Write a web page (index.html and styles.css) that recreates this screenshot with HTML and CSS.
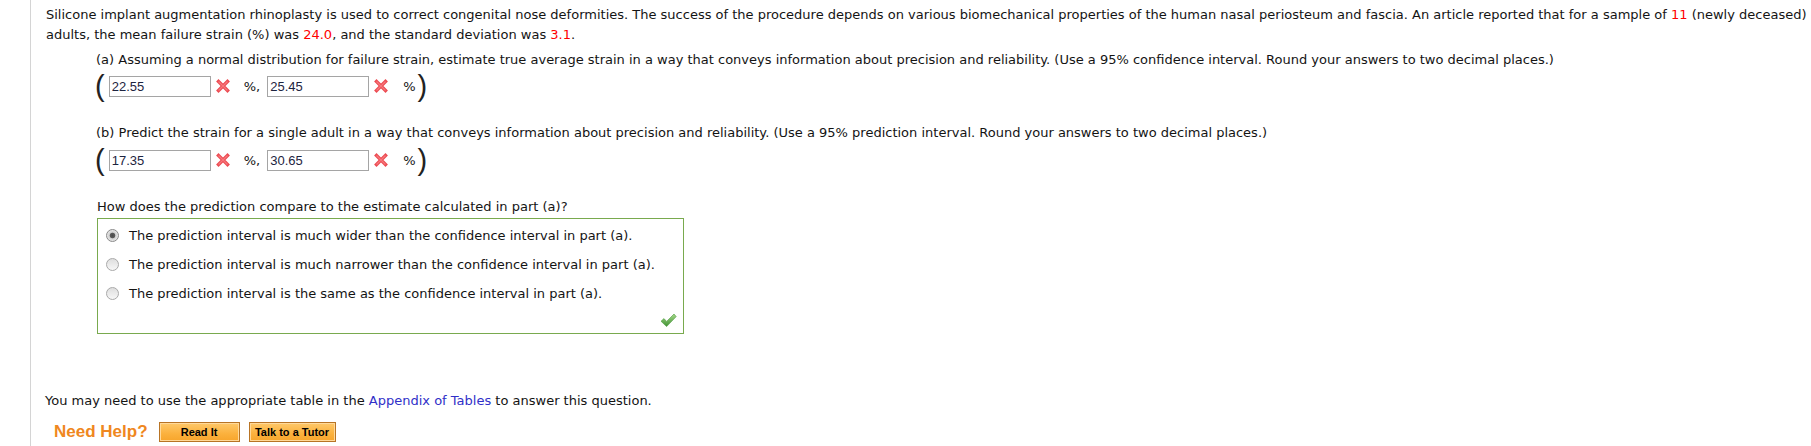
FILE: index.html
```html
<!DOCTYPE html>
<html>
<head>
<meta charset="utf-8">
<link rel="stylesheet" href="styles.css">
</head>
<body>
<div class="page">
  <p class="intro">Silicone implant augmentation rhinoplasty is used to correct congenital nose deformities. The success of the procedure depends on various biomechanical properties of the human nasal periosteum and fascia. An article reported that for a sample of <span class="red">11</span> (newly deceased) adults, the mean failure strain (%) was <span class="red">24.0</span>, and the standard deviation was <span class="red">3.1</span>.</p>

  <div class="part part-a">
    <p class="q">(a) Assuming a normal distribution for failure strain, estimate true average strain in a way that conveys information about precision and reliability. (Use a 95% confidence interval. Round your answers to two decimal places.)</p>
    <div class="interval">
      <span class="paren">(</span>
      <input class="field" type="text" value="22.55" readonly>
      <svg class="xmark" width="16" height="16" viewBox="0 0 16 16"><path d="M3.5 3.5 L12.5 12.5 M12.5 3.5 L3.5 12.5" stroke="#ec4b52" stroke-width="3.4" stroke-linecap="square" fill="none"/><path d="M3.5 3.5 L12.5 12.5 M12.5 3.5 L3.5 12.5" stroke="#f7787c" stroke-width="1.2" fill="none"/></svg>
      <span class="unit">%,</span>
      <input class="field field2" type="text" value="25.45" readonly>
      <svg class="xmark" width="16" height="16" viewBox="0 0 16 16"><path d="M3.5 3.5 L12.5 12.5 M12.5 3.5 L3.5 12.5" stroke="#ec4b52" stroke-width="3.4" stroke-linecap="square" fill="none"/><path d="M3.5 3.5 L12.5 12.5 M12.5 3.5 L3.5 12.5" stroke="#f7787c" stroke-width="1.2" fill="none"/></svg>
      <span class="unit unit2">%</span>
      <span class="paren paren-r">)</span>
    </div>
  </div>

  <div class="part part-b">
    <p class="q">(b) Predict the strain for a single adult in a way that conveys information about precision and reliability. (Use a 95% prediction interval. Round your answers to two decimal places.)</p>
    <div class="interval">
      <span class="paren">(</span>
      <input class="field" type="text" value="17.35" readonly>
      <svg class="xmark" width="16" height="16" viewBox="0 0 16 16"><path d="M3.5 3.5 L12.5 12.5 M12.5 3.5 L3.5 12.5" stroke="#ec4b52" stroke-width="3.4" stroke-linecap="square" fill="none"/><path d="M3.5 3.5 L12.5 12.5 M12.5 3.5 L3.5 12.5" stroke="#f7787c" stroke-width="1.2" fill="none"/></svg>
      <span class="unit">%,</span>
      <input class="field field2" type="text" value="30.65" readonly>
      <svg class="xmark" width="16" height="16" viewBox="0 0 16 16"><path d="M3.5 3.5 L12.5 12.5 M12.5 3.5 L3.5 12.5" stroke="#ec4b52" stroke-width="3.4" stroke-linecap="square" fill="none"/><path d="M3.5 3.5 L12.5 12.5 M12.5 3.5 L3.5 12.5" stroke="#f7787c" stroke-width="1.2" fill="none"/></svg>
      <span class="unit unit2">%</span>
      <span class="paren paren-r">)</span>
    </div>
  </div>

  <div class="mc">
    <p class="q">How does the prediction compare to the estimate calculated in part (a)?</p>
    <div class="choices">
      <div class="choice"><span class="radio on"></span>The prediction interval is much wider than the confidence interval in part (a).</div>
      <div class="choice"><span class="radio"></span>The prediction interval is much narrower than the confidence interval in part (a).</div>
      <div class="choice"><span class="radio"></span>The prediction interval is the same as the confidence interval in part (a).</div>
      <div class="mark">
        <svg width="17" height="15" viewBox="0 0 17 15">
          <defs><linearGradient id="g" x1="0" y1="0" x2="0" y2="1"><stop offset="0" stop-color="#a6d98a"/><stop offset="1" stop-color="#3f9132"/></linearGradient></defs>
          <path d="M1 8.2 L4 5.6 L6.6 8.4 L14 1 L16.2 3.6 L6.6 13.6 Z" fill="url(#g)" stroke="#4c9a3d" stroke-width="0.6" stroke-linejoin="round"/>
        </svg>
      </div>
    </div>
  </div>

  <p class="note">You may need to use the appropriate table in the <a class="link" href="#">Appendix of Tables</a> to answer this question.</p>

  <div class="help">
    <span class="need">Need Help?</span>
    <button class="btn btn-read" type="button">Read It</button>
    <button class="btn btn-tutor" type="button">Talk to a Tutor</button>
  </div>
</div>
</body>
</html>
```

FILE: styles.css
```css
html, body {
  margin: 0;
  padding: 0;
  background: #fff;
}
body {
  font-family: "DejaVu Sans", Verdana, sans-serif;
  font-size: 13px;
  color: #141414;
}
.page {
  margin-left: 30px;
  border-left: 1px solid #d4d4d4;
  min-height: 446px;
  box-sizing: border-box;
  padding: 5px 0 0 15px;
}
.intro {
  margin: 0;
  line-height: 20px;
}
.red { color: #f00; }
.part { margin-left: 50px; }
.q {
  margin: 0;
  line-height: 20px;
}
.part-a .q { margin-top: 5px; }
.part-b .q { margin-top: 24px; }
.interval {
  display: flex;
  align-items: center;
  height: 26px;
  margin-top: 3px;
}
.part-b .interval { margin-top: 4px; }
.paren {
  font-family: "Liberation Sans", Arial, sans-serif;
  font-size: 29px;
  line-height: 26px;
  color: #222;
  margin-left: -1px;
  margin-right: 4px;
}
.paren-r { margin-left: 2px; margin-right: 0; }
.field {
  width: 102px;
  height: 21px;
  box-sizing: border-box;
  border: 1px solid #a5a5a5;
  padding: 0 2px;
  margin: 0;
  font-family: "Liberation Sans", Arial, sans-serif;
  font-size: 13px;
  color: #1d2440;
  background: #fff;
  outline: none;
}
.field2 { margin-left: 7px; }
.xmark { margin-left: 4px; display: block; }
.unit { margin-left: 13px; }
.unit2 { margin-left: 14px; }
.mc { margin-left: 51px; }
.mc .q { margin-top: 24px; }
.choices {
  width: 587px;
  box-sizing: border-box;
  border: 1px solid #79aa4e;
  margin-top: 1px;
  padding-top: 2px;
}
.choice {
  display: flex;
  align-items: center;
  height: 29px;
  padding-left: 8px;
}
.radio {
  width: 13px;
  height: 13px;
  box-sizing: border-box;
  border-radius: 50%;
  border: 1px solid #a9a9a9;
  background: linear-gradient(#dedede, #f7f7f7);
  margin-right: 10px;
  flex: none;
}
.radio.on {
  border-color: #8a8a8a;
  background: radial-gradient(circle, #4a4a4a 0, #5a5a5a 2.4px, #cfcfcf 3.2px, #ececec 6px);
}
.mark {
  display: flex;
  justify-content: flex-end;
  align-items: center;
  height: 25px;
  padding-right: 6px;
}
.note {
  margin: 57px 0 0 -1px;
  line-height: 20px;
}
.link { color: #3030c8; text-decoration: none; }
.help {
  display: flex;
  align-items: center;
  height: 20px;
  margin: 11px 0 0 8px;
}
.need {
  font-family: "Liberation Sans", Arial, sans-serif;
  font-weight: bold;
  font-size: 17px;
  color: #ef8720;
  margin-right: 11px;
}
.btn {
  height: 20px;
  box-sizing: border-box;
  border: 1px solid #b87425;
  box-shadow: inset 0 0 0 1px #ffd99a;
  background: linear-gradient(#fec86a, #fbb13d 60%, #f7a52c);
  font-family: "Liberation Sans", Arial, sans-serif;
  font-weight: bold;
  font-size: 11px;
  color: #000;
  padding: 0;
  margin: 0 9px 0 0;
  border-radius: 0;
}
.btn-read { width: 81px; }
.btn-tutor { width: 87px; }
```
